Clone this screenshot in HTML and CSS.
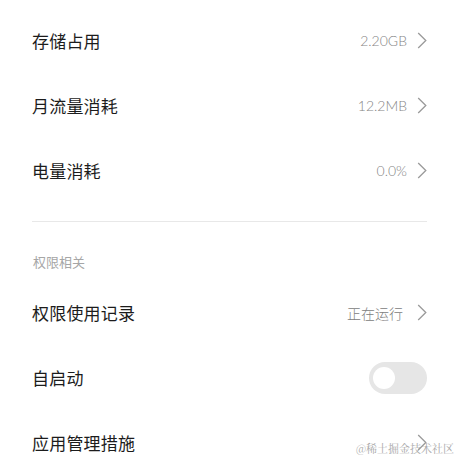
FILE: index.html
```html
<!DOCTYPE html>
<html lang="zh-CN">
<head>
<meta charset="utf-8">
<link rel="stylesheet" href="styles.css">
</head>
<body>
<div class="page">
  <div class="row">
    <span class="label">存储占用</span>
    <span class="right"><span class="value">2.20GB</span><svg class="chev" width="10" height="17" viewBox="0 0 10 17"><path d="M1.2 1 L8.8 8.5 L1.2 16" fill="none" stroke="#9a9a9a" stroke-width="1.3"/></svg></span>
  </div>
  <div class="row">
    <span class="label">月流量消耗</span>
    <span class="right"><span class="value">12.2MB</span><svg class="chev" width="10" height="17" viewBox="0 0 10 17"><path d="M1.2 1 L8.8 8.5 L1.2 16" fill="none" stroke="#9a9a9a" stroke-width="1.3"/></svg></span>
  </div>
  <div class="row">
    <span class="label">电量消耗</span>
    <span class="right"><span class="value">0.0%</span><svg class="chev" width="10" height="17" viewBox="0 0 10 17"><path d="M1.2 1 L8.8 8.5 L1.2 16" fill="none" stroke="#9a9a9a" stroke-width="1.3"/></svg></span>
  </div>
  <div class="divider"></div>
  <div class="section">权限相关</div>
  <div class="row">
    <span class="label">权限使用记录</span>
    <span class="right"><span class="value cjk">正在运行</span><svg class="chev" width="10" height="17" viewBox="0 0 10 17"><path d="M1.2 1 L8.8 8.5 L1.2 16" fill="none" stroke="#9a9a9a" stroke-width="1.3"/></svg></span>
  </div>
  <div class="row">
    <span class="label">自启动</span>
    <span class="toggle"><span class="knob"></span></span>
  </div>
  <div class="row">
    <span class="label">应用管理措施</span>
    <span class="right"><svg class="chev" width="10" height="17" viewBox="0 0 10 17"><path d="M1.2 1 L8.8 8.5 L1.2 16" fill="none" stroke="#9a9a9a" stroke-width="1.3"/></svg></span>
  </div>
  <div class="watermark">@稀土掘金技术社区</div>
</div>
</body>
</html>
```
FILE: styles.css
```css
html, body {
  margin: 0;
  padding: 0;
  background: #ffffff;
}
.page {
  position: relative;
  width: 460px;
  height: 460px;
  overflow: hidden;
  box-sizing: border-box;
  padding: 8px 33px 0 32px;
  font-family: "Noto Sans CJK SC", "Noto Sans", sans-serif;
  color: #1c1c1c;
}
.row {
  height: 65px;
  display: flex;
  align-items: center;
  justify-content: space-between;
}
.label {
  font-size: 17px;
  line-height: 20px;
  letter-spacing: 0.2px;
}
.right {
  display: flex;
  align-items: center;
  gap: 10px;
}
.value {
  font-family: Lato, "Noto Sans CJK SC", sans-serif;
  font-weight: 300;
  font-size: 14px;
  color: #858585;
}
.value.cjk {
  font-family: "Noto Sans CJK SC", sans-serif;
  font-weight: 300;
  font-size: 14px;
  color: #808080;
  margin-right: 4px;
}
.chev {
  display: block;
}
.divider {
  height: 1px;
  background: #e8e8e8;
  margin-top: 18px;
}
.section {
  padding-top: 30px;
  padding-bottom: 8px;
  padding-left: 1px;
  line-height: 20px;
  font-size: 13px;
  color: #a6a6a6;
}
.toggle {
  width: 58px;
  height: 32px;
  border-radius: 16px;
  background: #e6e6e6;
  display: flex;
  align-items: center;
  padding-left: 4px;
  box-sizing: border-box;
}
.knob {
  width: 22px;
  height: 22px;
  border-radius: 50%;
  background: #ffffff;
}
.watermark {
  position: absolute;
  right: 6px;
  bottom: 4px;
  font-size: 11px;
  color: #a0a0a0;
  font-family: "Noto Serif CJK SC", "Noto Sans CJK SC", serif;
  opacity: 0.9;
}
```
